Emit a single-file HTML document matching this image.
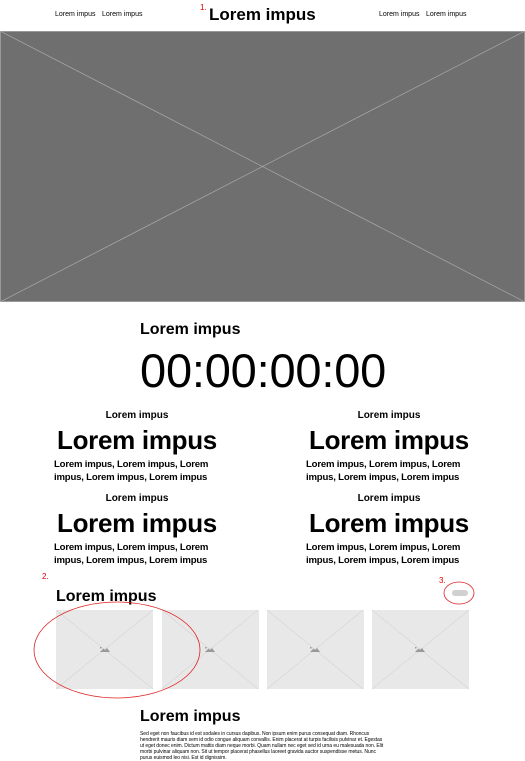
<!DOCTYPE html>
<html><head><meta charset="utf-8"><style>
*{margin:0;padding:0;box-sizing:border-box}
body{width:525px;height:761px;overflow:hidden;background:#fff;font-family:"Liberation Sans",sans-serif;color:#000;position:relative}
.a{position:absolute;white-space:nowrap}
.nav{font-size:7px;top:11px}
.col{position:absolute;width:166px;text-align:center}
.col .s{font-size:10px;font-weight:bold;line-height:12px}
.col .b{font-size:26px;font-weight:bold;line-height:34px;margin-top:1px;white-space:nowrap;letter-spacing:-0.3px}
.col .t{font-size:9.6px;font-weight:bold;line-height:12.5px;margin-top:2px;text-align:left;white-space:nowrap;letter-spacing:-0.2px}
.card{position:absolute;top:610px;width:97px;height:79px;background:#e8e8e8}
</style></head><body>
<div class="a nav" style="left:55px">Lorem impus</div>
<div class="a nav" style="left:102px">Lorem impus</div>
<div class="a nav" style="left:379px">Lorem impus</div>
<div class="a nav" style="left:426px">Lorem impus</div>
<div class="a" style="left:200px;top:3px;color:#d00;font-size:8px">1.</div>
<div class="a" style="left:209px;top:5px;font-size:17px;font-weight:bold">Lorem impus</div>
<svg class="a" style="left:0;top:31px" width="525" height="271"><rect width="525" height="271" fill="#6f6f6f"/><rect x="0.5" y="0.5" width="524" height="270" fill="none" stroke="#999"/><line x1="0" y1="0" x2="525" y2="271" stroke="#aaa" stroke-width="0.7"/><line x1="525" y1="0" x2="0" y2="271" stroke="#aaa" stroke-width="0.7"/></svg>
<div class="a" style="left:140px;top:321px;font-size:16px;font-weight:bold">Lorem impus</div>
<div class="a" style="left:140px;top:346px;font-size:47px;line-height:50px;letter-spacing:-0.2px">00:00:00:00</div>
<div class="col" style="left:54px;top:410px"><div class="s">Lorem impus</div><div class="b">Lorem impus</div><div class="t">Lorem impus, Lorem impus, Lorem<br>impus, Lorem impus, Lorem impus</div></div>
<div class="col" style="left:306px;top:410px"><div class="s">Lorem impus</div><div class="b">Lorem impus</div><div class="t">Lorem impus, Lorem impus, Lorem<br>impus, Lorem impus, Lorem impus</div></div>
<div class="col" style="left:54px;top:493px"><div class="s">Lorem impus</div><div class="b">Lorem impus</div><div class="t">Lorem impus, Lorem impus, Lorem<br>impus, Lorem impus, Lorem impus</div></div>
<div class="col" style="left:306px;top:493px"><div class="s">Lorem impus</div><div class="b">Lorem impus</div><div class="t">Lorem impus, Lorem impus, Lorem<br>impus, Lorem impus, Lorem impus</div></div>
<div class="a" style="left:56px;top:588px;font-size:16px;font-weight:bold">Lorem impus</div>
<div class="a" style="left:42px;top:572px;color:#d00;font-size:8px">2.</div>
<div class="a" style="left:439px;top:576px;color:#d00;font-size:8px">3.</div>
<div class="a" style="left:452px;top:590px;width:16px;height:6px;background:#d0d0d0;border-radius:3px"></div>
<div class="card" style="left:56px"></div><div class="card" style="left:162px"></div><div class="card" style="left:267px"></div><div class="card" style="left:372px"></div>
<svg class="a" style="left:0;top:570px" width="525" height="130">
<g stroke="#d4d4d4" stroke-width="0.6">
<path d="M56 40l97 79M153 40l-97 79M162 40l96 79M258 40l-96 79M267 40l96 79M363 40l-96 79M372 40l97 79M469 40l-97 79"/></g>
<g fill="#999"><path d="M100 82h10l-3-4-2 2-1.5-1.5zM100 77h1.5v1.5h-1.5z"/><path d="M205 82h10l-3-4-2 2-1.5-1.5zM205 77h1.5v1.5h-1.5z"/><path d="M310 82h10l-3-4-2 2-1.5-1.5zM310 77h1.5v1.5h-1.5z"/><path d="M415 82h10l-3-4-2 2-1.5-1.5zM415 77h1.5v1.5h-1.5z"/></g>
<g fill="none" stroke="#d22" stroke-width="0.8"><ellipse cx="117" cy="80" rx="83" ry="48"/><ellipse cx="459" cy="23" rx="15" ry="11"/></g>
</svg>
<div class="a" style="left:140px;top:708px;font-size:16px;font-weight:bold">Lorem impus</div>
<div class="a" style="left:140px;top:731px;width:244px;font-size:5px;line-height:6px;white-space:normal;letter-spacing:-0.05px">Sed eget non faucibus id est sodales in cursus dapibus. Non ipsum enim purus consequat diam. Rhoncus hendrerit mauris diam sem id odio congue aliquam convallis. Enim placerat at turpis facilisis pulvinar et. Egestas ut eget donec enim. Dictum mattis diam neque morbi. Quam nullam nec eget sed id urna eu malesuada non. Elit morbi pulvinar aliquam non. Sit ut tempor placerat phasellus laoreet gravida auctor suspendisse metus. Nunc purus euismod leo nisi. Est id dignissim.</div>
</body></html>
